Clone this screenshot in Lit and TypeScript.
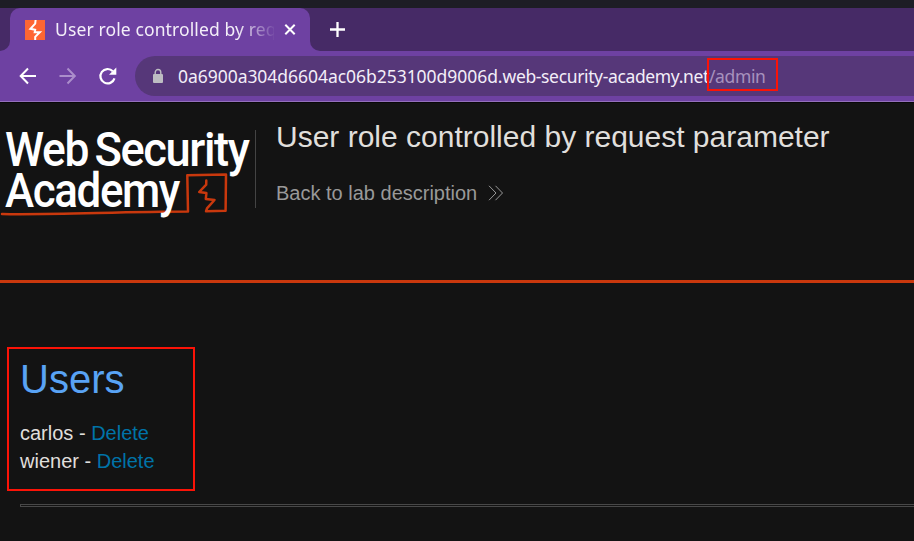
import { LitElement, html, css } from "lit";
import { customElement } from "lit/decorators.js";

@customElement("browser-chrome")
class BrowserChrome extends LitElement {
  static styles = css`
    :host { display: block; font-family: "Noto Sans", sans-serif; color: #f3eef8; white-space: nowrap; }
    svg { display: block; flex: none; }
    .desktop { height: 8px; background: #1d1d25; }
    .tabs { height: 43px; background: #462a66; display: flex; }
    .corner { width: 10px; background: #6e41a2; }
    .corner.left i { display: block; height: 43px; background: #462a66; border-bottom-right-radius: 10px; }
    .corner.right i { display: block; height: 43px; background: #462a66; border-bottom-left-radius: 10px; }
    .tabwrap { background: #462a66; }
    .tab { width: 300px; height: 43px; box-sizing: border-box; padding-left: 15px; background: #6e41a2; border-radius: 10px 10px 0 0; display: flex; align-items: center; }
    .title { width: 219px; flex: none; margin: -2px 0 0 10px; overflow: hidden; font-size: 17.5px; line-height: 26px; letter-spacing: 0.12px;
      -webkit-mask-image: linear-gradient(90deg, #000 182px, transparent 222px); mask-image: linear-gradient(90deg, #000 182px, transparent 222px); }
    .close { margin: -2px 0 0 5px; }
    .plus { margin: 14px 0 0 10px; }
    .toolbar { height: 51px; background: #6e41a2; border-bottom: 1px solid #9470bc; box-sizing: border-box; display: flex; align-items: center; padding-left: 18px; }
    .nav { display: flex; gap: 20px; }
    .address { margin-left: 17px; flex: 1; height: 40px; background: #563779; border-radius: 20px 0 0 20px; display: flex; align-items: center; padding-left: 17px; }
    .url { margin-left: 14px; font-size: 17.5px; line-height: 26px; letter-spacing: -0.36px; }
    .sub { letter-spacing: -0.04px; }
    .path { color: #a791bd; }
    .edge { height: 1px; background: #080808; }
  `;
  render() {
    return html`
      <div class="desktop"></div>
      <div class="tabs">
        <div class="corner left"><i></i></div>
        <div class="tabwrap"><div class="tab">
          <svg width="20" height="20" viewBox="0 0 20 20"><path fill="#ff6633" d="M0 0h20v20H0z"/><path fill="none" stroke="#fff" stroke-width="2" d="M10.6 0 10.2 3.6 5.4 8.8 10.2 9.8 9.7 12.3H14.8L10.2 16.8V20"/></svg>
          <span class="title">User role controlled by request</span>
          <svg class="close" width="20" height="20" viewBox="0 0 20 20"><path d="m6.3 5.8 9.4 9.4m0-9.4-9.4 9.4" stroke="#fff" stroke-width="2"/></svg>
        </div></div>
        <div class="corner right"><i></i></div>
        <svg class="plus" width="15" height="15" viewBox="0 0 15 15"><path d="M7.5 0v15M0 7.5h15" stroke="#fff" stroke-width="2.3"/></svg>
      </div>
      <div class="toolbar">
        <div class="nav">
          <svg width="20" height="20" viewBox="0 0 20 20"><path d="M18 10H3.5M10 2.5 2.7 10l7.3 7.5" fill="none" stroke="#fff" stroke-width="2"/></svg>
          <svg width="20" height="20" viewBox="0 0 20 20"><path d="M1.5 10H16M9.5 2.5 16.8 10l-7.3 7.5" fill="none" stroke="#ab8ecb" stroke-width="2"/></svg>
          <svg width="20" height="20" viewBox="0 0 20 20"><path d="M16.5 12.4A7.2 7.2 0 1 1 14.8 5.2" fill="none" stroke="#fff" stroke-width="2.2"/><path fill="#fff" d="M18.3 1.5v7.2H11z"/></svg>
        </div>
        <div class="address">
          <svg width="12" height="16" viewBox="0 0 12 16"><path d="M3.2 7V4.5a2.8 3 0 0 1 5.6 0V7" fill="none" stroke="#bdbdc2" stroke-width="1.4"/><rect x="1" y="6" width="10" height="9" rx="1" fill="#bdbdc2"/></svg>
          <span class="url"><span class="sub">0a6900a304d6604ac06b253100d9006d.</span>web-security-academy.net<span class="path">/admin</span></span>
        </div>
      </div>
      <div class="edge"></div>`;
  }
}

@customElement("academy-logo")
class AcademyLogo extends LitElement {
  static styles = css`
    :host { display: block; width: 255px; height: 90px; }
    svg { display: block; overflow: visible; }
    text { font-family: Roboto, sans-serif; font-weight: 500; font-size: 48px; letter-spacing: -1.5px; fill: #fff; }
    .line { fill: none; stroke: #c9380d; stroke-linejoin: round; stroke-linecap: round; }
  `;
  render() {
    return html`<svg width="255" height="90" viewBox="0 128 255 90">
      <path class="line" stroke-width="2.5" d="M2 214C45 215.2 120 211.8 188 211.6L187.3 175.3 226 174.5 225.6 210.7 206 211.3 207 208.3 214.5 200 205.8 198.9 206.4 193 199.2 192 206.2 184.6 206.3 180.6"/>
      <text x="5" y="166" textLength="83" lengthAdjust="spacingAndGlyphs">Web</text>
      <text x="94.5" y="166" textLength="154" lengthAdjust="spacingAndGlyphs">Security</text>
      <text x="5" y="207" textLength="174" lengthAdjust="spacingAndGlyphs">Academy</text>
    </svg>`;
  }
}

@customElement("app-root")
class AppRoot extends LitElement {
  static styles = css`
    :host { display: block; position: relative; width: 914px; height: 541px; overflow: hidden; background: #131313; color: #e0dfdc; font-family: "Liberation Sans", Arial, sans-serif; }
    .header { display: flex; height: 180px; box-sizing: border-box; padding-top: 25px; border-bottom: 3px solid #c9380d; }
    .info { margin-top: 2px; height: 78px; border-left: 1px solid #444; padding-left: 20px; }
    h2 { margin: -11px 0 0; font-size: 30px; line-height: 36px; font-weight: 400; white-space: nowrap; }
    .back { display: flex; align-items: center; margin-top: 26px; font-size: 20px; line-height: 24px; color: #999; }
    .back svg { margin-left: 11px; }
    .content { padding: 72px 0 0 20px; }
    h1 { margin: 0; font-size: 40px; line-height: 48px; font-weight: 400; color: #59a3f5; }
    .users { margin-top: 16px; font-size: 20px; line-height: 28px; }
    a { color: #0073a8; }
    .rule { margin-top: 29px; height: 1px; border: 1px solid #484848; border-right: 0; }
    .mark { position: absolute; box-sizing: border-box; border: 2px solid #fb1307; }
    .mark.path { left: 707px; top: 58px; width: 71px; height: 33px; }
    .mark.list { left: 7px; top: 347px; width: 188px; height: 144px; }
  `;
  render() {
    const users = ["carlos", "wiener"];
    return html`
      <browser-chrome></browser-chrome>
      <div class="header">
        <academy-logo></academy-logo>
        <div class="info">
          <h2>User role controlled by request parameter</h2>
          <div class="back">Back to lab description
            <svg width="16" height="16" viewBox="0 0 16 16"><path d="m1 .8 7 7.2-7 7.2M7.5 .8l7 7.2-7 7.2" fill="none" stroke="#999" stroke-width="1"/></svg>
          </div>
        </div>
      </div>
      <div class="content">
        <h1>Users</h1>
        <div class="users">${users.map((u) => html`<div>${u} - <a>Delete</a></div>`)}</div>
        <div class="rule"></div>
      </div>
      <div class="mark path"></div>
      <div class="mark list"></div>`;
  }
}
